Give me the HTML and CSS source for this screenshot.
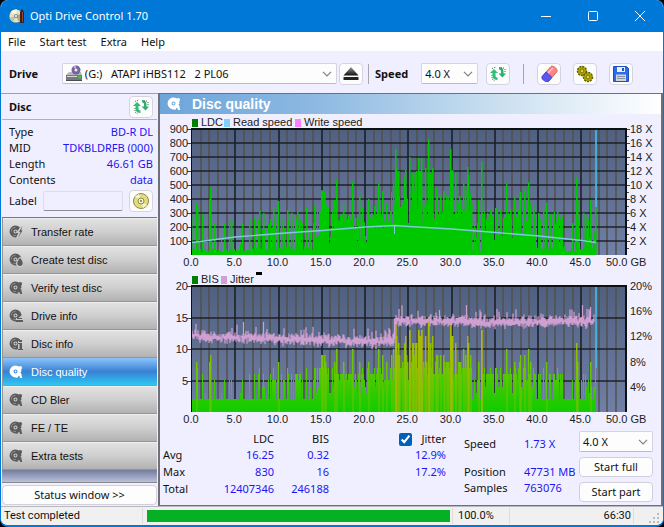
FILE: index.html
```html
<!DOCTYPE html>
<html lang="en">
<head>
<meta charset="utf-8">
<title>Opti Drive Control 1.70</title>
<link rel="stylesheet" href="styles.css">
</head>
<body>
<svg class="defs" aria-hidden="true">
  <symbol id="disc" viewBox="0 0 14 14">
    <path fill-rule="evenodd" d="M6.500.5a6 6 0 1 0 2.500 11.500V9.200L12.500 6.500A6 6 0 0 0 6.500.5zM6.500 4.500a2 2 0 1 1 0 4a2 2 0 0 1 0-4z"/>
    <path class="groove" d="M2.400 6.500a4.100 4.100 0 0 1 4.100-4.100M4.200 10a4.100 4.100 0 0 0 2.800.6"/>
    <circle cx="6.500" cy="6.500" r="1"/>
  </symbol>
  <symbol id="disc-check" viewBox="0 0 14 14">
    <use href="#disc" width="14" height="14"/>
    <circle cx="11.200" cy="2.800" r="1.900"/>
    <path d="M8.500 7.500h3.500l1.200 5.500h-2l-1.200-2.500-1.500 2H7z"/>
  </symbol>
  <symbol id="refresh" viewBox="0 0 18 16">
    <path fill="#2fbd78" d="M1 7l4-4 4 4H6.500v2.500c0 1.500 1 2 2 2v2.500C5.500 14 3.500 12.500 3.500 9.500V7z"/>
    <path fill="#2fae6e" d="M17 7.500l-3.500 4-4-4H12V5.500C12 4 11 3.500 10 3.500V1c3 0 4.500 1.500 4.500 4.500v2z"/>
    <path fill="none" stroke="#456b58" stroke-dasharray="1 1" d="M3 2.500l4-1.500M12 2h4M3 9v4l3 2M16 3v3"/>
  </symbol>
  <symbol id="chevron" viewBox="0 0 10 6"><path fill="none" stroke="#808080" stroke-width="1.200" d="M1 .8l4 4 4-4"/></symbol>
</svg>

<div class="window">
  <header class="titlebar">
    <svg class="app-icon" viewBox="0 0 16 16"><circle cx="7" cy="8" r="6.600" fill="#eadfbc"/><path d="M7 8L2 3.700A6.600 6.600 0 0 1 8 1.500z" fill="#fff6d8"/><path d="M7 8l-3 6a6.600 6.600 0 0 1-3.500-4z" fill="#b9c4a0"/><path d="M7 8l6-3v7l-3 2z" fill="#c1a76d"/><circle cx="7" cy="8" r="2" fill="#6c88a0"/><circle cx="7" cy="8" r="1" fill="#fff"/><path d="M11 4l2-3 2 3v11h-4z" fill="#342522"/><path d="M13.500 4v10" stroke="#a33b2c"/></svg>
    <h1>Opti Drive Control 1.70</h1>
    <div class="captions">
      <button aria-label="Minimize"><svg viewBox="0 0 12 12"><path d="M1 6.500h10"/></svg></button>
      <button aria-label="Maximize"><svg viewBox="0 0 12 12"><rect x="1.500" y="1.500" width="9" height="9" rx="1"/></svg></button>
      <button aria-label="Close"><svg viewBox="0 0 12 12"><path d="M1 1l10 10M11 1L1 11"/></svg></button>
    </div>
  </header>

  <nav class="menu"><button>File</button><button>Start test</button><button>Extra</button><button>Help</button></nav>

  <div class="toolbar">
    <label class="strong drive-label" for="drive">Drive</label>
    <span class="select drive-select">
      <svg class="drive-icon" viewBox="0 0 18 17"><path fill="#b9b9bd" d="M1 10l3-3h12l1 3z"/><path fill="#77777d" d="M1 10h16v5H1z"/><path fill="#d9d9dc" d="M2 11h10v1H2z"/><path fill="#2bd42b" d="M13 11h3v2h-3z"/><path stroke="#4c4c52" d="M1 15.500h16"/><circle cx="11" cy="5" r="4.500" fill="#75649c"/><path fill="#b9aed4" d="M11 5L8 1.500 11 .5z"/><circle cx="11" cy="5" r="1.500" fill="#efeaf8"/></svg>
      <select id="drive"><option>(G:) &nbsp; ATAPI iHBS112 &nbsp; 2 PL06</option></select>
      <svg class="arrow"><use href="#chevron"/></svg>
    </span>
    <button class="tool eject" aria-label="Eject"><svg viewBox="0 0 16 14"><defs><linearGradient id="metal" x2="0" y2="1"><stop stop-color="#999"/><stop offset="1" stop-color="#111"/></linearGradient></defs><path fill="url(#metal)" d="M8 0l7.500 8.500H.5z"/><path fill="#222" d="M.5 10h15v3H.5z"/></svg></button>
    <span class="divider"></span>
    <label class="strong" for="speed">Speed</label>
    <span class="select speed-select"><select id="speed"><option>4.0 X</option></select><svg class="arrow"><use href="#chevron"/></svg></span>
    <button class="tool" aria-label="Refresh speed"><svg><use href="#refresh"/></svg></button>
    <span class="divider wide"></span>
    <div class="actions">
      <button class="tool" aria-label="Erase"><svg viewBox="0 0 18 18"><path fill="#ff8585" stroke="#d85f69" d="M6 7l5-5.500c1.500-1.500 7 2 6 5l-5 6z"/><path fill="#5b57f2" stroke="#4b43c8" d="M6 7l6 5.500L9 16c-2 2-8-1-7-4.500z"/><path stroke="#ffc0bd" stroke-width="1.500" d="M8 8l5-5"/></svg></button>
      <button class="tool" aria-label="Options"><svg viewBox="0 0 18 18"><g fill="#b3ac00" stroke="#5d5900"><circle cx="6" cy="6" r="4.500" stroke-dasharray="2 1" stroke-width="1.500"/><circle cx="12" cy="12" r="4.500" stroke-dasharray="2 1" stroke-width="1.500"/></g><g fill="#d8d13a" stroke="#777100"><circle cx="6" cy="6" r="2"/><circle cx="12" cy="12" r="2"/></g></svg></button>
      <button class="tool" aria-label="Save"><svg viewBox="0 0 18 18"><path fill="#2c6cea" stroke="#1d4fc0" d="M1.500 1.500h13l2 2v13h-15z"/><path fill="#e9edf6" d="M5 2h8v5H5z"/><path fill="#2456b8" d="M10 3h2v3h-2z"/><path fill="#cfd3da" d="M4 9.500h10V16H4z"/><path stroke="#8c929c" d="M5 11.500h8M5 13.500h8"/></svg></button>
    </div>
  </div>

  <main class="content">
    <aside class="sidebar">
      <div class="disc-head"><h2>Disc</h2><button class="tool" aria-label="Refresh disc"><svg><use href="#refresh"/></svg></button></div>
      <div class="disc-info">
        <dl>
          <dt>Type</dt><dd>BD-R DL</dd>
          <dt>MID</dt><dd>TDKBLDRFB (000)</dd>
          <dt>Length</dt><dd>46.61 GB</dd>
          <dt>Contents</dt><dd>data</dd>
        </dl>
        <div class="label-row">
          <label for="disc-label">Label</label><input id="disc-label" type="text">
          <button class="tool" aria-label="Read label"><svg viewBox="0 0 16 16"><circle cx="8" cy="8" r="7.500" fill="#e2dc82" stroke="#8d8748"/><path fill="#f8f5bf" d="M8 8L2 3.500 6 1zM8 8l6 4.500-4 2.500z"/><circle cx="8" cy="8" r="3" fill="#f4f2d6" stroke="#8d8748"/><circle cx="8" cy="8" r="1" fill="#777"/></svg></button>
        </div>
      </div>
      <nav class="tests">
        <button><svg viewBox="0 0 14 14"><use href="#disc"/><path class="cut" d="M13 1L9 7h2l-3 6"/><path d="M13.500 1L10 7h1.500L9 13l4.500-7.500H12z"/></svg>Transfer rate</button>
        <button><svg viewBox="0 0 14 14"><use href="#disc"/><path class="cut" d="M11 5c5 4 3 8 0 8s-5-3 0-8z"/><path d="M11 5c4 4 3 8 0 8s-4-4 0-8z"/></svg>Create test disc</button>
        <button><svg viewBox="0 0 14 14"><use href="#disc-check"/></svg>Verify test disc</button>
        <button><svg viewBox="0 0 14 14"><use href="#disc"/><path class="cut" d="M8 10h5v2H8z"/><path d="M8 9h5v1H8zM7 11h7v2H7z"/></svg>Drive info</button>
        <button><svg viewBox="0 0 14 14"><use href="#disc"/><path class="cut" d="M10 5h2v7h-2z"/><path d="M10 3h3v2h-3zM9 6h4v6h1v1H9v-1h1.500V7H9z"/></svg>Disc info</button>
        <button class="active"><svg viewBox="0 0 14 14"><use href="#disc-check"/></svg>Disc quality</button>
        <button><svg viewBox="0 0 14 14"><use href="#disc-check"/></svg>CD Bler</button>
        <button><svg viewBox="0 0 14 14"><use href="#disc-check"/></svg>FE / TE</button>
        <button><svg viewBox="0 0 14 14"><use href="#disc-check"/></svg>Extra tests</button>
      </nav>
      <div class="filler"></div>
      <button class="push status-toggle">Status window &gt;&gt;</button>
    </aside>

    <section class="panel">
      <h2 class="panel-title"><svg viewBox="0 0 14 14"><use href="#disc-check"/></svg>Disc quality</h2>
      <svg class="chart" id="ldc-chart" viewBox="0 0 501 157" role="img" aria-label="LDC and speed"></svg>
      <svg class="chart" id="bis-chart" viewBox="0 0 501 157" role="img" aria-label="BIS and jitter"></svg>
      <div class="results">
        <table>
          <thead><tr><th></th><th>LDC</th><th>BIS</th><th><label><input type="checkbox" checked>Jitter</label></th></tr></thead>
          <tbody>
            <tr><th>Avg</th><td>16.25</td><td>0.32</td><td>12.9%</td></tr>
            <tr><th>Max</th><td>830</td><td>16</td><td>17.2%</td></tr>
            <tr><th>Total</th><td>12407346</td><td>246188</td><td></td></tr>
          </tbody>
        </table>
        <dl>
          <dt>Speed</dt><dd>1.73 X</dd>
          <dt>Position</dt><dd>47731 MB</dd>
          <dt>Samples</dt><dd>763076</dd>
        </dl>
        <div class="controls">
          <span class="select"><select aria-label="Test speed"><option>4.0 X</option></select><svg class="arrow"><use href="#chevron"/></svg></span>
          <button class="push">Start full</button>
          <button class="push">Start part</button>
        </div>
      </div>
    </section>
  </main>

  <footer class="statusbar">
    <span class="message">Test completed</span>
    <progress value="100" max="100" aria-label="Test progress"></progress>
    <span class="percent">100.0%</span>
    <span class="time">66:30</span>
    <svg class="grip" viewBox="0 0 12 12"><path fill="#bcbcbc" d="M8 1h2v2H8zM8 5h2v2H8zM4 5h2v2H4zM8 9h2v2H8zM4 9h2v2H4zM0 9h2v2H0z"/></svg>
  </footer>
</div>
<script src="charts.js"></script>
</body>
</html>
```
FILE: styles.css
```css
* { box-sizing: border-box; }
body { margin: 0; background: #000; color: #111; font: 11px/16px "Noto Sans", "Open Sans", sans-serif; }
h1, h2, dl, dd { margin: 0; font-size: inherit; font-weight: inherit; }
button, select, input { font: inherit; color: inherit; margin: 0; }
button { padding: 0; border: 0; background: none; }
svg { display: block; flex: none; }
.defs { position: absolute; width: 0; height: 0; }
.groove { fill: none; stroke: #fff; stroke-opacity: .3; stroke-width: 1; }

.window { display: flex; flex-direction: column; min-height: 100vh; background: #f0efff; border: 1px solid #0078d7; border-width: 0 1px 2px; border-radius: 8px; overflow: hidden; }

.titlebar { display: flex; align-items: center; height: 32px; padding-left: 8px; background: #0078d7; color: #fff; }
.app-icon { width: 16px; height: 16px; }
.titlebar h1 { flex: 1; margin-left: 5px; font: 11px/16px "Noto Sans", "Open Sans", sans-serif; }
.captions { display: flex; }
.captions button { display: grid; place-items: center; width: 47px; height: 32px; }
.captions svg { width: 12px; height: 12px; fill: none; stroke: #fff; }

.menu { display: flex; gap: 14px; height: 19px; padding-left: 7px; background: #fff; }

.toolbar { display: flex; align-items: center; height: 42px; padding: 3px 30px 0 8px; }
.strong, .disc-head h2 { font-weight: 700; }
.drive-label { width: 53px; }
.select { position: relative; display: flex; align-items: center; height: 21px; background: #fdfdfe; border: 1px solid #d4d3df; border-bottom-color: #bcbcc6; border-radius: 2px; }
.select select { appearance: none; flex: 1; min-width: 0; height: 100%; padding: 0 20px 0 3px; background: none; border: 0; }
.arrow { position: absolute; right: 4px; width: 10px; height: 6px; pointer-events: none; }
.drive-select { flex: 0 1 276px; }
.drive-icon { width: 18px; height: 17px; margin-left: 2px; }
.drive-select select { padding-left: 2px; }
.speed-select { width: 57px; margin: 0 8px 0 13px; }
.tool { display: grid; place-items: center; flex: none; width: 24px; height: 22px; background: #fdfdfe; border: 1px solid #d5d4de; border-radius: 4px; }
.tool svg { width: 18px; height: 16px; }
.actions .tool svg { height: 18px; }
.eject { margin-left: 2px; }
.tool.eject svg { width: 16px; height: 14px; }
.divider { width: 1px; height: 20px; margin: 0 6px 0 5px; background: #a5a5af; }
.wide { margin: 0 13px; }
.actions { display: flex; gap: 12px; }

.content { display: grid; grid-template-columns: 157px minmax(0, 1fr); flex: 1; }
.sidebar { display: flex; flex-direction: column; padding: 0 1px; border-top: 1px solid #a0a0a8; }
.disc-head { display: flex; align-items: center; justify-content: space-between; height: 26px; padding: 0 4px 0 7px; border-bottom: 1px solid #b0b0b8; }
.disc-info { padding: 4px 4px 3px 7px; }
.disc-info dl { display: grid; grid-template-columns: auto 1fr; }
dd { color: #1e14f4; }
.disc-info dd { text-align: right; }
.label-row { display: flex; align-items: center; height: 26px; }
.label-row input { flex: 1; min-width: 0; height: 20px; margin: 0 6px; background: none; border: 1px solid #dddce8; border-bottom: 1px solid #8c8c94; border-radius: 2px; }
.tests { display: flex; flex-direction: column; border-top: 1px solid #777; }
.tests button { display: flex; align-items: center; gap: 8px; height: 28px; padding-left: 6px; background: linear-gradient(#e3e3e3, #cfcfcf 50%, #b2b2b2); border: 1px solid #959595; border-width: 0 0 1px 1px; box-shadow: inset 0 1px #efefef; font: 11px/16px "Liberation Sans", Arial, sans-serif; }
.tests svg { width: 14px; height: 14px; fill: #5b5b5b; }
.tests .cut { fill: #ccc; stroke: #ccc; stroke-width: 2; }
.tests .active { color: #fff; background: linear-gradient(#8cc4fa, #3a80d4 50%, #2cc8f2); box-shadow: none; }
.tests .active svg, .panel-title svg { fill: #fff; }
.active .groove, .panel-title .groove { stroke: #5b9bd5; }
.filler { flex: 1; background: linear-gradient(#747d9e, #b9c0da); border-bottom: 1px solid #888; }
.push { height: 20px; background: #fdfdfe; border: 1px solid #d0cfdb; border-radius: 4px; text-align: center; }
.status-toggle { margin: 2px 0 1px; }

.panel { display: flex; flex-direction: column; border: solid #707078; border-width: 1px 2px 1px 2px; }
.panel-title { display: flex; align-items: center; gap: 11px; height: 20px; padding-left: 7px; background: linear-gradient(90deg, #6da5d9, #8cb8e2 30%, #bad6ec 58%, #fff); color: #fff; font: 700 14px/20px "Liberation Sans", Arial, sans-serif; }
.panel-title svg { width: 14px; height: 14px; }
.chart { width: 100%; height: auto; font: 11px "Liberation Sans", Arial, sans-serif; }
.results { display: flex; flex: 1; padding: 3px 8px 2px 3px; }
table { width: 283px; height: 66px; border-collapse: collapse; table-layout: fixed; }
th, td { height: 16px; padding: 0; text-align: right; font-weight: 400; }
thead th:nth-child(1) { width: 46px; }
thead th:nth-child(2) { width: 65px; }
thead th:nth-child(3) { width: 55px; }
tbody th { text-align: left; }
td { color: #1e14f4; }
th label { display: flex; align-items: center; justify-content: flex-end; gap: 9px; }
input[type="checkbox"] { width: 13px; height: 13px; accent-color: #005fb8; }
.results dl { display: grid; grid-template-columns: 60px auto; grid-template-rows: 28px 16px 16px; flex: 1; margin: 5px 0 0 18px; }
.controls { display: flex; flex-direction: column; gap: 5px; width: 74px; }

.statusbar { display: flex; align-items: center; height: 19px; background: #f0f0f0; border-top: 1px solid #b8b8c0; font-family: Roboto, "Noto Sans", sans-serif; }
.message { width: 142px; padding-left: 3px; border-right: 1px solid #ddd; }
progress { appearance: none; flex: 1; height: 12px; margin-left: 4px; border: 0; }
progress::-webkit-progress-bar { background: #e0e0e0; }
progress::-webkit-progress-value { background: #06b025; }
.percent { width: 58px; margin-left: 2px; padding-left: 5px; border: 1px solid #ddd; border-width: 0 1px; }
.time { width: 124px; padding-right: 2px; border-right: 1px solid #ddd; text-align: right; }
.grip { width: 12px; height: 12px; margin: 4px 2px 0 15px; }
```
FILE: charts.js
```js
// Plot area inside each chart; x is 0-50 GB.
const LEFT = 32, TOP = 15, WIDTH = 434, HEIGHT = 126;
const BOTTOM = TOP + HEIGHT;
const END = 405;

let seed = 41;
const rand = () => (seed = (seed * 16807) % 2147483647) / 2147483647;

// LDC zones: end column, typical value, spread, dropout rate, dropout value.
const zones = [
  [62, 32, 22, .1, 110], [123, 215, 65, .48, 50], [138, 330, 60, .12, 180],
  [142, 120, 80, .3, 40], [162, 270, 40, .2, 150], [176, 230, 80, .4, 120],
  [200, 270, 90, .2, 190], [232, 410, 150, .25, 310], [280, 380, 110, .35, 310],
  [290, 190, 130, .45, 40], [345, 285, 70, .25, 150], [372, 260, 70, .52, 50],
  [384, 50, 30, .3, 25], [END + 1, 190, 90, .5, 60]
];
// Measured LDC peaks: column, value.
const peaks = [
  0,278, 5,370, 6,335, 11,290, 19,475, 18,400, 23,220, 33,231, 38,248, 40,240, 51,231, 58,255, 63,267, 68,320, 72,297,
  77,231, 82,344, 87,384, 90,267, 96,320, 100,297, 104,283, 106,306, 109,255, 115,344, 123,349, 130,467, 131,455,
  133,448, 135,349, 141,314, 143,396, 145,538, 149,283, 152,373, 154,290, 161,521, 164,267, 168,420, 171,337,
  177,401, 180,302, 183,349, 187,514, 191,460, 195,373, 202,526, 204,755, 205,620, 207,597, 213,560, 214,608,
  218,703, 221,585, 222,585, 224,590, 225,597, 227,691, 228,600, 229,600, 230,691, 234,620, 237,825, 239,585,
  241,620, 245,479, 249,432, 252,455, 255,420, 259,755, 260,600, 261,608, 264,585, 268,420, 272,514, 274,467,
  276,627, 277,573, 280,361, 287,392, 290,663, 296,302, 299,330, 304,337, 309,330, 315,507, 319,325, 323,415,
  328,408, 329,450, 333,467, 337,521, 339,373, 342,349, 347,297, 352,325, 355,368, 359,290, 366,314, 370,231,
  381,231, 385,557, 386,396, 392,302, 394,278, 399,396, 404,349
];

const ldc = [];
for (let i = 0, z = 0; i < END; i++) {
  while (i >= zones[z][0]) z++;
  const [, typical, spread, rate, low] = zones[z];
  const r = rand();
  ldc.push(r < rate ? low * (.7 + rand() * .5) : Math.max(18, typical + (rand() - .5) * 2 * spread * .7));
}
for (let i = 0; i < peaks.length; i += 2) ldc[peaks[i]] = peaks[i + 1];

const rect = (x, y, w, h, fill, extra = "") => `<rect x="${x}" y="${y}" width="${w}" height="${h}" fill="${fill}" ${extra}/>`;
const text = (x, y, s, anchor = "start") => `<text x="${x}" y="${y}" text-anchor="${anchor}" fill="#222">${s}</text>`;

// One stepped outline, so neighbouring columns join without seams.
function area(heights, fill) {
  let d = `M${LEFT - 1} ${BOTTOM}`;
  heights.forEach((h, i) => { d += `V${BOTTOM - Math.round(h)}H${LEFT + i}`; });
  return `<path d="${d}V${BOTTOM}z" fill="${fill}"/>`;
}

function frame(id, rows) {
  let s = `<defs><linearGradient id="${id}-bg" x2="0" y2="1"><stop stop-color="#506080"/><stop offset="1" stop-color="#7080a6"/></linearGradient></defs>`;
  s += rect(LEFT, TOP, WIDTH, HEIGHT, `url(#${id}-bg)`);
  for (let g = 1; g < 50; g++) {
    const x = Math.round(LEFT + g * 8.650) - 1;
    s += g % 5 ? rect(x, TOP, 2, HEIGHT, "#54504e", 'opacity=".75"') : rect(x, TOP, 2, HEIGHT, "#181b20", 'opacity=".75"');
  }
  for (let r = 1; r < rows; r++) s += rect(LEFT, Math.round(TOP + r * HEIGHT / rows) - 1, WIDTH, 2, "#181b20", 'opacity=".7"');
  return s;
}

function outline(rows) {
  let s = rect(31, 14, 436, 2, "#0c1214") + rect(31, 14, 1, 127, "#0c1214") + rect(465, 14, 2, 127, "#0c1214");
  for (let r = 0; r < rows; r++) s += rect(27, Math.round(TOP + r * HEIGHT / rows), 4, 1, "#444");
  for (let g = 0; g < 50; g += 5) s += text(LEFT + g * 8.650 - 1, 152, g.toFixed(1), "middle");
  return s + text(446, 152, "50.0 GB");
}

// LDC and read speed
let out = frame("ldc", 9);
out += area(ldc.map(v => v * .14), "#00c800");
for (let i = 0; i < peaks.length; i += 2) {
  const h = Math.round(peaks[i + 1] * .14);
  out += rect(LEFT + peaks[i], BOTTOM - h, 1, h, "#00c800", 'opacity=".5"');
}
const speed = [[0,128.500],[43,123],[87,119.500],[130,116.500],[173,113],[203,111.500],[217,112.500],[260,115],[304,118.500],[347,122],[390,126.500],[404,128.500]];
out += `<polyline points="${speed.map(p => `${p[0] + 32},${p[1]}`).join(" ")}" fill="none" stroke="#7ccbd8" stroke-width="1.300"/>`;
out += rect(234, 111, 1, 9, "#84c8ee") + rect(435, TOP, 2, 78, "#40b8e8", 'opacity=".85"');
out += outline(9);
for (let v = 1; v <= 9; v++) out += text(28, 145 - v * 14, v * 100, "end");
for (let v = 1; v <= 9; v++) out += rect(467, TOP + (9 - v) * 14, 3, 1, "#444") + text(470, 145 - v * 14, v * 2 + " X");
for (let v = 0; v < 9; v++) out += rect(467, TOP + 7 + v * 14, 2, 1, "#444");
out += rect(32, 5, 6, 8, "#008000") + text(41, 12, "LDC") + rect(64, 5, 6, 8, "#80d0ff") + text(73, 12, "Read speed");
out += rect(135, 5, 6, 8, "#ff80ff") + text(144, 12, "Write speed");
document.getElementById("ldc-chart").innerHTML = out;

// BIS and jitter
out = frame("bis", 4);
out += `<defs><linearGradient id="bis-fill" gradientUnits="userSpaceOnUse" x1="0" y1="141" x2="0" y2="40"><stop stop-color="#10cc00"/><stop offset=".45" stop-color="#5cc800"/><stop offset="1" stop-color="#a8c000"/></linearGradient></defs>`;
const bis = ldc.map(v => Math.max(1, Math.round(1.200 + v * .0172)));
out += area(bis.map(v => v * HEIGHT / 20), "url(#bis-fill)");
bis.forEach((v, i) => {
  const h = Math.round(v * HEIGHT / 20);
  if (v > 7) out += rect(LEFT + i - 1, BOTTOM - h, 2, h, v > 10 ? "#b8b800" : "#80c400", `opacity="${v > 12 ? .7 : .4}"`);
});
let jitter = "";
for (let i = 0; i < 403; i++) {
  const late = i > 202;
  const mean = (late ? 50.500 + Math.sin(i / 40) : 65.500 + Math.min(i, 170) * .028) + (rand() - .5) * 3;
  const up = 1 + rand() * 5 + (rand() < .22 ? rand() * 10 : 0);
  const down = 1 + rand() * 4 + (rand() < .15 ? rand() * 4 : 0);
  jitter += `M${i + 32} ${(mean - up).toFixed(1)}V${(mean + down).toFixed(1)}`;
}
out += `<path d="${jitter}M234.500 48V68M83.500 51V66M103.500 51V66M422.500 34V52M430.500 36V52M306.500 34V52M279.500 39V52" stroke="#cf9fd2" stroke-width="1.200" fill="none"/>`;
out += rect(435, TOP, 2, 82, "#40b8e8", 'opacity=".85"') + outline(4);
for (let v = 1; v <= 4; v++) out += text(28, 145 - v * 31.500, v * 5, "end");
for (let v = 1; v <= 5; v++) out += text(470, 145 - v * 25.200, v * 4 + "%");
out += rect(32, 5, 6, 8, "#008000") + text(41, 12, "BIS") + rect(61, 5, 6, 8, "#d0a0d0") + text(70, 12, "Jitter") + rect(96, 1, 6, 3, "#000");
document.getElementById("bis-chart").innerHTML = out;
```
